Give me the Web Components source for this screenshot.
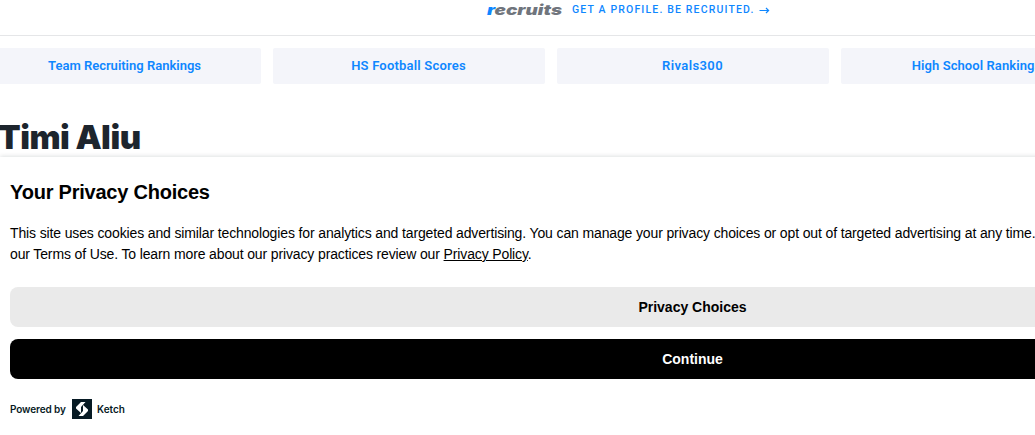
<!DOCTYPE html>
<html lang="en">
<head>
<meta charset="utf-8">
<title>Timi Aliu</title>
<style>
    body {
        margin: 0;
        height: 435px;
        overflow: hidden;
        background: #fff;
        font-family: "Liberation Sans", Arial, sans-serif;
    }
</style>
</head>
<body>
<profile-page>
    <promo-bar slot="promo">GET A PROFILE. BE RECRUITED.</promo-bar>
    <quick-links slot="links">
        <quick-link style="--tracking: 0">Team Recruiting Rankings</quick-link>
        <quick-link style="--tracking: 0.2px">HS Football Scores</quick-link>
        <quick-link style="--tracking: 0.4px">Rivals300</quick-link>
        <quick-link style="--tracking: 0.08px">High School Rankings</quick-link>
    </quick-links>
    <span slot="name">Timi Aliu</span>
    <privacy-banner slot="banner">
        <span slot="title">Your Privacy Choices</span>
        <span slot="text">This site uses cookies and similar technologies for analytics and targeted advertising. You can manage your privacy choices or opt out of targeted advertising at any time.<br>our Terms of Use. To learn more about our privacy practices review our <u>Privacy Policy</u>.</span>
        <banner-button slot="actions">Privacy Choices</banner-button>
        <banner-button slot="actions" primary>Continue</banner-button>
        <ketch-badge slot="badge"></ketch-badge>
    </privacy-banner>
</profile-page>

<script>
class ProfilePage extends HTMLElement {
    constructor() {
        super();
        this.attachShadow({mode: 'open'});
        this.shadowRoot.innerHTML = `
        <style>
            :host {
                display: flex;
                flex-direction: column;
                width: 1385px;
                height: 435px;
            }
            h1 {
                flex: 1;
                min-height: 0;
                margin: 0 0 0 -2px;
                padding-top: 33px;
                font: 900 33px/40px Inter, sans-serif;
                letter-spacing: -0.5px;
                color: #1d252d;
            }
        </style>
        <slot name="promo"></slot>
        <slot name="links"></slot>
        <h1><slot name="name"></slot></h1>
        <slot name="banner"></slot>
        `;
    }
}

class PromoBar extends HTMLElement {
    constructor() {
        super();
        this.attachShadow({mode: 'open'});
        this.shadowRoot.innerHTML = `
        <style>
            :host {
                display: flex;
                box-sizing: border-box;
                height: 36px;
                padding-left: 486px;
                border-bottom: 1px solid #e5e6e8;
            }
            .logo {
                flex: none;
                width: 78px;
                height: 20px;
                margin-right: 8px;
            }
            a {
                display: flex;
                height: 20px;
                align-items: center;
                font: 500 10.5px/20px Roboto, sans-serif;
                letter-spacing: 1.15px;
                color: #0f87ff;
                white-space: nowrap;
            }
            .arrow {
                margin-left: 4px;
            }
        </style>
        <svg class="logo" viewBox="0 0 78 20">
            <text x="1" y="15" font-family="Inter, sans-serif" font-weight="900" font-style="italic" font-size="14.5" textLength="75" lengthAdjust="spacingAndGlyphs" fill="#70757d"><tspan fill="#0f87ff">r</tspan>ecruits</text>
        </svg>
        <a><slot></slot>
            <svg class="arrow" width="11" height="8" viewBox="0 0 11 8" fill="none" stroke="#0f87ff" stroke-width="1.2"><path d="M.5 4.500h9M7 2L9.600 4.500L7 7"/></svg>
        </a>
        `;
    }
}

class QuickLinks extends HTMLElement {
    constructor() {
        super();
        this.attachShadow({mode: 'open'});
        this.shadowRoot.innerHTML = `
        <style>
            :host {
                display: grid;
                grid-template-columns: repeat(4, 272px);
                gap: 12px;
                margin: 12px 0 0 -11px;
            }
        </style>
        <slot></slot>
        `;
    }
}

class QuickLink extends HTMLElement {
    constructor() {
        super();
        this.attachShadow({mode: 'open'});
        this.shadowRoot.innerHTML = `
        <style>
            :host {
                display: block;
                box-sizing: border-box;
                height: 36px;
                padding-right: 1px;
                border-radius: 2px;
                background: #f4f5fa;
                font: 600 13px/36px Roboto, sans-serif;
                letter-spacing: var(--tracking, 0.2px);
                text-align: center;
                color: #0f87ff;
                white-space: nowrap;
            }
        </style>
        <slot></slot>
        `;
    }
}

class PrivacyBanner extends HTMLElement {
    constructor() {
        super();
        this.attachShadow({mode: 'open'});
        this.shadowRoot.innerHTML = `
        <style>
            :host {
                position: relative;
                display: flex;
                flex-direction: column;
                box-sizing: border-box;
                height: 278px;
                padding: 20px 10px 0;
                background: #fff;
                box-shadow: 0 0 5px rgba(7, 26, 36, 0.18);
                color: #000;
            }
            h2 {
                margin: 0;
                font-size: 20px;
                line-height: 30px;
                letter-spacing: -0.22px;
            }
            p {
                margin: 16px 0 22px;
                font-size: 14px;
                line-height: 21px;
                letter-spacing: -0.133px;
                white-space: nowrap;
            }
            .actions {
                display: flex;
                flex-direction: column;
                gap: 12px;
                margin-bottom: 20px;
            }
        </style>
        <h2><slot name="title"></slot></h2>
        <p><slot name="text"></slot></p>
        <div class="actions"><slot name="actions"></slot></div>
        <slot name="badge"></slot>
        `;
    }
}

class BannerButton extends HTMLElement {
    constructor() {
        super();
        this.attachShadow({mode: 'open'});
        this.shadowRoot.innerHTML = `
        <style>
            :host {
                display: block;
                height: 40px;
                border-radius: 8px;
                background: #eaeaea;
                color: #000;
                font-size: 14px;
                font-weight: 700;
                line-height: 40px;
                text-align: center;
            }
            :host([primary]) {
                background: #000;
                color: #fff;
            }
        </style>
        <slot></slot>
        `;
    }
}

class KetchBadge extends HTMLElement {
    constructor() {
        super();
        this.attachShadow({mode: 'open'});
        this.shadowRoot.innerHTML = `
        <style>
            :host {
                display: flex;
                align-items: center;
                height: 20px;
                font: 600 10px/20px Inter, sans-serif;
                color: #071a24;
                white-space: nowrap;
            }
            svg {
                margin: 0 5px 0 6px;
            }
            .powered {
                width: 56px;
                letter-spacing: -0.1px;
            }
        </style>
        <span class="powered">Powered by</span>
        <svg width="20" height="20" viewBox="0 0 20 20">
            <path fill="#071a24" d="M0 0h20v20H0z"/>
            <path fill="#fff" d="M9 3h4.500L9 8v6L4 9.500V8z"/>
            <path fill="#fff" d="M11 17H6.500L11 12V6l5 4.500V12z"/>
        </svg>
        <span class="ketch">Ketch</span>
        `;
    }
}

customElements.define('profile-page', ProfilePage);
customElements.define('promo-bar', PromoBar);
customElements.define('quick-links', QuickLinks);
customElements.define('quick-link', QuickLink);
customElements.define('privacy-banner', PrivacyBanner);
customElements.define('banner-button', BannerButton);
customElements.define('ketch-badge', KetchBadge);
</script>
</body>
</html>
